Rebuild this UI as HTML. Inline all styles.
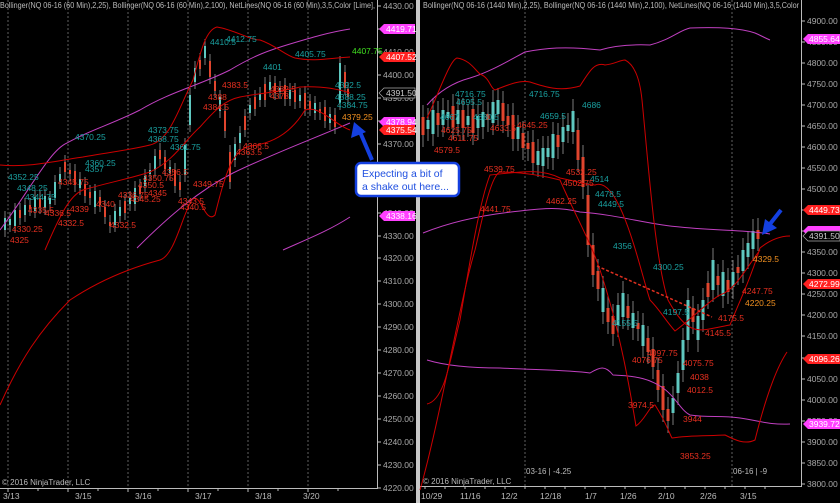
<!DOCTYPE html>
<html><head><meta charset="utf-8"><style>
html,body{margin:0;padding:0;background:#000;width:840px;height:503px;overflow:hidden}
svg{display:block;font-family:"Liberation Sans",sans-serif}
</style></head><body>
<svg width="840" height="503" viewBox="0 0 840 503" xmlns="http://www.w3.org/2000/svg">
<rect width="840" height="503" fill="#000"/>
<rect x="416" y="0" width="4" height="503" fill="#c8c8c8"/>
<g stroke="#888" stroke-width="0.7" stroke-dasharray="2,2">
<line x1="8" y1="0" x2="8" y2="488"/><line x1="68" y1="0" x2="68" y2="488"/><line x1="128" y1="0" x2="128" y2="488"/>
<line x1="188" y1="0" x2="188" y2="488"/><line x1="248" y1="0" x2="248" y2="488"/><line x1="308" y1="0" x2="308" y2="488"/>
<line x1="525" y1="0" x2="525" y2="486"/><line x1="732" y1="0" x2="732" y2="486"/>
</g>
<g stroke="#bbb" stroke-width="1" fill="none">
<line x1="377.5" y1="0" x2="377.5" y2="489"/><line x1="0" y1="488.5" x2="378" y2="488.5"/>
<line x1="801.5" y1="0" x2="801.5" y2="487"/><line x1="420" y1="486.5" x2="802" y2="486.5"/>
<path d="M377,6h4M377,29h4M377,52h4M377,75h4M377,98h4M377,121h4M377,144h4M377,167h4M377,190h4M377,213h4M377,236h4M377,258h4M377,281h4M377,304h4M377,327h4M377,350h4M377,373h4M377,396h4M377,419h4M377,442h4M377,465h4M377,488h4"/>
<path d="M801,21h4M801,42h4M801,63h4M801,84h4M801,105h4M801,126h4M801,147h4M801,168h4M801,189h4M801,210h4M801,231h4M801,252h4M801,273h4M801,294h4M801,315h4M801,336h4M801,358h4M801,379h4M801,400h4M801,421h4M801,442h4M801,463h4M801,484h4"/>
<path d="M8,488v4M38,488v3M68,488v4M98,488v3M128,488v4M158,488v3M188,488v4M218,488v3M248,488v4M278,488v3M308,488v4M338,488v3"/>
<path d="M425,486v3M445,486v3M465,486v3M485,486v3M505,486v3M525,486v3M545,486v3M565,486v3M585,486v3M605,486v3M625,486v3M645,486v3M665,486v3M685,486v3M705,486v3M725,486v3M745,486v3M765,486v3"/>
</g>
<path fill="none" stroke="#999" stroke-width="0.8" d="M5,211V237M10,212V232M15,203V233M25,198V222M35,190V218M45,189V215M50,191V211M55,175V205M60,167V189M80,172V195M95,184V214M115,204V232M120,200V223M130,191V211M135,181V211M145,169V193M150,163V181M155,149V177M170,160V180M185,138V182M190,88V132M195,61V89M205,39V65M220,90V118M235,137V167M240,126V150M250,98V120M260,87V107M270,75V97M280,81V99M290,83V106M300,88V108M315,96V120M330,107V130M340,56V110M20,203V225M30,198V216M40,191V214M65,155V179M70,163V181M75,164V192M85,177V203M90,185V205M100,190V212M105,200V224M110,215V233M125,194V220M140,179V201M160,143V166M165,150V176M175,163V193M180,175V197M200,53V76M210,54V84M215,74V98M225,104V138M230,145V189M245,109V137M255,90V116M265,77V107M275,76V100M285,78V106M295,83V109M305,86V116M310,94V116M320,102V120M325,100V128M335,108V134M345,65V95M348,82V104
M423,105V147M428,108V141M433,98V146M438,101V137M443,98V137M448,100V130M453,94V139M458,98V136M463,98V140M468,104V137M473,97V145M478,104V140M483,100V139M488,102V132M493,90V135M498,88V126M503,91V133M508,104V137M513,103V151M518,115V151M523,121V160M528,131V161M533,130V175M538,139V177M543,136V178M548,136V169M553,122V170M558,123V159M563,115V154M568,113V143M573,99V144M578,118V172M583,145V199M588,183V257M593,233V287M598,259V301M603,276V324M608,296V334M613,304V346M618,293V337M623,281V329M628,294V330M633,301V340M638,311V341M643,313V358M648,326V364M653,337V379M658,358V402M663,374V422M668,397V433M673,386V425M678,361V405M683,328V382M688,288V352M693,296V334M698,304V352M703,288V332M708,271V309M713,248V302M718,264V297M723,260V308M728,268V304M733,260V299M738,255V285M743,238V283M748,231V269M753,219V261M758,218V251"/>
<path fill="#5fc8c0" d="M4 218h2v12h-2zM9 219h2v6h-2zM14 210h2v16h-2zM24 205h2v10h-2zM34 197h2v14h-2zM44 196h2v12h-2zM49 198h2v6h-2zM54 182h2v16h-2zM59 174h2v8h-2zM79 179h2v9h-2zM94 191h2v16h-2zM114 211h2v14h-2zM119 207h2v9h-2zM129 198h2v6h-2zM134 188h2v16h-2zM144 176h2v10h-2zM149 170h2v4h-2zM154 156h2v14h-2zM169 167h2v6h-2zM184 145h2v30h-2zM189 95h2v30h-2zM194 68h2v14h-2zM204 46h2v12h-2zM219 97h2v14h-2zM234 144h2v16h-2zM239 133h2v10h-2zM249 105h2v8h-2zM259 94h2v6h-2zM269 82h2v8h-2zM279 88h2v4h-2zM289 90h2v9h-2zM299 95h2v6h-2zM314 103h2v10h-2zM329 114h2v9h-2zM339 63h2v40h-2z
M426.5 120h3v9h-3zM431.5 110h3v24h-3zM441.5 110h3v15h-3zM446.5 112h3v6h-3zM456.5 110h3v14h-3zM466.5 116h3v9h-3zM476.5 116h3v12h-3zM481.5 112h3v15h-3zM491.5 102h3v21h-3zM496.5 100h3v14h-3zM516.5 127h3v12h-3zM536.5 151h3v14h-3zM541.5 148h3v18h-3zM546.5 148h3v9h-3zM551.5 134h3v24h-3zM561.5 127h3v15h-3zM566.5 125h3v6h-3zM571.5 111h3v21h-3zM601.5 288h3v24h-3zM616.5 305h3v20h-3zM621.5 293h3v24h-3zM631.5 313h3v15h-3zM641.5 325h3v21h-3zM671.5 398h3v15h-3zM676.5 373h3v20h-3zM681.5 340h3v30h-3zM686.5 300h3v40h-3zM696.5 316h3v24h-3zM701.5 300h3v20h-3zM711.5 260h3v30h-3zM721.5 272h3v24h-3zM731.5 272h3v15h-3zM741.5 250h3v21h-3zM746.5 243h3v14h-3zM751.5 231h3v18h-3z"/>
<path fill="#e0452e" d="M19 210h2v8h-2zM29 205h2v4h-2zM39 198h2v9h-2zM64 162h2v10h-2zM69 170h2v4h-2zM74 171h2v14h-2zM84 184h2v12h-2zM89 192h2v6h-2zM99 197h2v8h-2zM104 207h2v10h-2zM109 222h2v4h-2zM124 201h2v12h-2zM139 186h2v8h-2zM159 150h2v9h-2zM164 157h2v12h-2zM174 170h2v16h-2zM179 182h2v8h-2zM199 60h2v9h-2zM209 61h2v16h-2zM214 81h2v10h-2zM224 111h2v20h-2zM229 152h2v30h-2zM244 116h2v14h-2zM254 97h2v12h-2zM264 84h2v16h-2zM274 83h2v10h-2zM284 85h2v14h-2zM294 90h2v12h-2zM304 93h2v16h-2zM309 101h2v8h-2zM319 109h2v4h-2zM324 107h2v14h-2zM334 115h2v12h-2zM344 72h2v16h-2zM347 89h2v8h-2z
M421.5 117h3v18h-3zM436.5 113h3v12h-3zM451.5 106h3v21h-3zM461.5 110h3v18h-3zM471.5 109h3v24h-3zM486.5 114h3v6h-3zM501.5 103h3v18h-3zM506.5 116h3v9h-3zM511.5 115h3v24h-3zM521.5 133h3v15h-3zM526.5 143h3v6h-3zM531.5 142h3v21h-3zM556.5 135h3v12h-3zM576.5 130h3v30h-3zM581.5 157h3v30h-3zM586.5 195h3v50h-3zM591.5 245h3v30h-3zM596.5 271h3v18h-3zM606.5 308h3v14h-3zM611.5 316h3v18h-3zM626.5 306h3v12h-3zM636.5 323h3v6h-3zM646.5 338h3v14h-3zM651.5 349h3v18h-3zM656.5 370h3v20h-3zM661.5 386h3v24h-3zM666.5 409h3v12h-3zM691.5 308h3v14h-3zM706.5 283h3v14h-3zM716.5 276h3v9h-3zM726.5 280h3v12h-3zM736.5 267h3v6h-3zM756.5 230h3v9h-3z"/>
<g fill="none" stroke-width="1">
<path stroke="#c040c0" d="M0,230 C30,190 50,150 67,143 C90,130 110,125 140,110 C170,92 200,85 230,70 C255,55 270,50 290,44 C310,38 330,32 350,29"/>
<path stroke="#c040c0" d="M137,248 C170,215 200,190 233,173 C270,155 310,140 350,123"/>
<path stroke="#c040c0" d="M283,250 C310,238 330,230 350,217"/>
<path stroke="#c00" d="M0,165 C30,168 60,160 83,157 C110,152 130,150 150,145 C170,140 178,110 193,80 C200,55 205,30 217,27 C235,30 250,40 260,40 C275,45 285,55 295,58 C315,62 330,58 350,57"/>
<path stroke="#c00" d="M45,250 C60,215 70,195 83,190 C110,182 125,180 150,172 C175,160 185,140 200,127 C215,110 225,100 240,97 C260,93 280,92 300,87 C320,86 335,88 350,93"/>
<path stroke="#c00" d="M0,405 C20,360 40,330 70,300 C100,280 130,268 160,260 C175,255 182,215 192,200 C200,190 205,225 215,215 C225,175 232,150 250,146 C270,144 290,135 305,110 C320,105 335,125 350,130"/>
<path stroke="#c040c0" d="M427,105 C440,90 455,82 470,78 C490,72 510,60 525,52 C545,48 565,46 600,50 C610,47 625,44 650,45 C670,40 680,30 690,28 C720,27 740,28 755,33 C760,35 765,38 770,40"/>
<path stroke="#c040c0" d="M423,233 C450,222 480,215 520,211 C545,208 560,207 580,212 C620,215 650,225 680,227 C720,231 745,230 770,234"/>
<path stroke="#c040c0" d="M427,360 C450,367 480,368 500,368 C540,370 570,370 590,373 C600,367 605,365 613,375 C640,376 650,380 660,386 C675,395 680,410 690,415 C710,418 720,415 740,418 C760,421 770,425 790,424"/>
<path stroke="#c00" d="M427,118 C440,90 450,60 457,58 C470,60 475,70 480,74 C490,78 490,88 495,90 C510,84 520,80 530,82 C545,87 560,92 580,86 C590,70 595,62 605,65 C615,64 620,60 625,60 C635,65 640,80 642,100 C648,160 655,260 668,300 C690,340 700,330 730,325 C740,300 750,280 760,248 C770,240 780,236 790,236"/>
<path stroke="#c00" d="M427,404 C445,400 450,360 460,320 C470,260 480,200 490,175 C520,172 540,168 560,178 C580,182 585,185 595,185 C620,175 640,270 650,300 C660,310 665,320 675,331 C690,320 710,300 720,295 C735,290 745,270 760,250"/>
<path stroke="#c00" d="M420,490 C440,420 460,300 475,250 C480,230 490,175 500,172 C520,172 540,175 560,180 C575,215 590,240 600,270 C620,330 630,390 636,426 C645,420 650,405 655,405 C665,420 670,435 672,438 C690,435 710,436 725,435 C735,440 745,445 755,440 C765,400 775,370 787,352"/>
<path stroke="#e03020" stroke-width="1.5" stroke-dasharray="3,2" d="M597,266 L712,317"/>
</g>
<g font-size="8.5" fill="#1aa0a0">
<text x="210" y="45">4410.5</text><text x="226" y="42">4412.75</text><text x="295" y="57">4405.75</text><text x="263" y="70">4401</text>
<text x="75" y="140">4370.25</text><text x="148" y="133">4373.75</text><text x="148" y="142">4368.75</text><text x="170" y="150">4361.75</text>
<text x="85" y="166">4360.25</text><text x="85" y="172">4357</text><text x="8" y="180">4352.25</text><text x="17" y="191">4348.25</text><text x="25" y="200">4344.75</text>
<text x="335" y="88">4392.5</text><text x="335" y="100">4388.25</text><text x="337" y="108">4384.75</text>
<text x="455" y="97">4716.75</text><text x="456" y="105">4695.5</text><text x="529" y="97">4716.75</text><text x="582" y="108">4686</text>
<text x="540" y="119">4659.5</text><text x="473" y="120">4680.5</text><text x="440" y="120">4667</text>
<text x="590" y="182">4514</text><text x="595" y="197">4478.5</text><text x="598" y="207">4449.5</text>
<text x="613" y="249">4356</text><text x="653" y="270">4300.25</text><text x="663" y="315">4197.5</text><text x="612" y="326">4155.5</text>
</g>
<g font-size="8.5" fill="#e83020">
<text x="208" y="100">4388</text><text x="203" y="110">4384.5</text><text x="222" y="88">4383.5</text><text x="270" y="92">4382.5</text><text x="270" y="99">4378</text>
<text x="143" y="181">4350.75</text><text x="138" y="188">4350.5</text><text x="162" y="175">4356.5</text><text x="193" y="187">4349.75</text>
<text x="243" y="149">4366.5</text><text x="236" y="155">4363.5</text><text x="178" y="204">4343.5</text><text x="180" y="210">4340.5</text>
<text x="148" y="196">4345</text><text x="130" y="202">4345.25</text><text x="96" y="207">4340</text><text x="118" y="198">4336.75</text>
<text x="28" y="213">4335.5</text><text x="45" y="216">4336.5</text><text x="70" y="212">4339</text><text x="58" y="226">4332.5</text><text x="110" y="228">4332.5</text>
<text x="12" y="232">4330.25</text><text x="10" y="243">4325</text><text x="58" y="185">4345.75</text>
<text x="434" y="153">4579.5</text><text x="441" y="133">4625.75</text><text x="448" y="141">4611.75</text><text x="490" y="131">4633.5</text><text x="517" y="128">4645.25</text>
<text x="484" y="172">4539.75</text><text x="566" y="175">4532.25</text><text x="563" y="186">4502.75</text><text x="546" y="204">4462.25</text><text x="480" y="212">4441.75</text>
<text x="632" y="363">4076.75</text><text x="647" y="356">4097.75</text><text x="628" y="408">3974.5</text><text x="690" y="380">4038</text><text x="687" y="393">4012.5</text>
<text x="683" y="366">4075.75</text><text x="683" y="422">3944</text><text x="680" y="459">3853.25</text><text x="705" y="336">4145.5</text><text x="718" y="321">4175.5</text>
<text x="742" y="294">4247.75</text>
</g>
<g font-size="8.5" fill="#f09020">
<text x="342" y="120">4379.25</text><text x="753" y="262">4329.5</text><text x="745" y="306">4220.25</text>
</g>
<text x="352" y="54" font-size="8.5" fill="#40e020">4407.75</text>
<g font-size="8.5" fill="#aaa">
<text x="383" y="9">4430.00</text><text x="383" y="32">4420.00</text><text x="383" y="55">4410.00</text><text x="383" y="78">4400.00</text><text x="383" y="101">4390.00</text><text x="383" y="124">4380.00</text><text x="383" y="147">4370.00</text><text x="383" y="170">4360.00</text><text x="383" y="193">4350.00</text><text x="383" y="216">4340.00</text><text x="383" y="239">4330.00</text><text x="383" y="261">4320.00</text><text x="383" y="284">4310.00</text><text x="383" y="307">4300.00</text><text x="383" y="330">4290.00</text><text x="383" y="353">4280.00</text><text x="383" y="376">4270.00</text><text x="383" y="399">4260.00</text><text x="383" y="422">4250.00</text><text x="383" y="445">4240.00</text><text x="383" y="468">4230.00</text><text x="383" y="491">4220.00</text>
<text x="807" y="24">4900.00</text><text x="807" y="45">4850.00</text><text x="807" y="66">4800.00</text><text x="807" y="87">4750.00</text><text x="807" y="108">4700.00</text><text x="807" y="129">4650.00</text><text x="807" y="150">4600.00</text><text x="807" y="171">4550.00</text><text x="807" y="192">4500.00</text><text x="807" y="213">4450.00</text><text x="807" y="234">4400.00</text><text x="807" y="255">4350.00</text><text x="807" y="276">4300.00</text><text x="807" y="297">4250.00</text><text x="807" y="318">4200.00</text><text x="807" y="339">4150.00</text><text x="807" y="361">4100.00</text><text x="807" y="382">4050.00</text><text x="807" y="403">4000.00</text><text x="807" y="424">3950.00</text><text x="807" y="445">3900.00</text><text x="807" y="466">3850.00</text><text x="807" y="487">3800.00</text>
</g>
<g font-size="8.5">
<path d="M379,29 L384,24 L415,24 L415,34 L384,34Z" fill="#ff40ff"/><text x="386" y="32" fill="#fff">4419.71</text>
<path d="M379,57 L384,52 L415,52 L415,62 L384,62Z" fill="#ff2020"/><text x="386" y="60" fill="#fff">4407.52</text>
<path d="M379,93 L384,88 L415,88 L415,98 L384,98Z" fill="#000" stroke="#aaa" stroke-width="0.7"/><text x="386" y="96" fill="#ccc">4391.50</text>
<path d="M379,122 L384,117 L415,117 L415,127 L384,127Z" fill="#ff40ff"/><text x="386" y="125" fill="#fff">4378.94</text>
<path d="M379,130 L384,125 L415,125 L415,135 L384,135Z" fill="#ff2020"/><text x="386" y="133" fill="#fff">4375.54</text>
<path d="M379,216 L384,211 L415,211 L415,221 L384,221Z" fill="#ff40ff"/><text x="386" y="219" fill="#fff">4338.16</text>
<path d="M803,39 L808,34 L840,34 L840,44 L808,44Z" fill="#ff40ff"/><text x="809" y="42" fill="#fff">4855.64</text>
<path d="M803,210 L808,205 L840,205 L840,215 L808,215Z" fill="#ff2020"/><text x="809" y="213" fill="#fff">4449.73</text>
<path d="M803,231 L808,226 L840,226 L840,236 L808,236Z" fill="#ff40ff"/>
<path d="M803,236 L808,231 L840,231 L840,241 L808,241Z" fill="#000" stroke="#aaa" stroke-width="0.7"/><text x="809" y="239" fill="#ccc">4391.50</text>
<path d="M803,284 L808,279 L840,279 L840,289 L808,289Z" fill="#ff2020"/><text x="809" y="287" fill="#fff">4272.99</text>
<path d="M803,359 L808,354 L840,354 L840,364 L808,364Z" fill="#ff2020"/><text x="809" y="362" fill="#fff">4096.26</text>
<path d="M803,424 L808,419 L840,419 L840,429 L808,429Z" fill="#ff40ff"/><text x="809" y="427" fill="#fff">3939.72</text>
</g>
<g font-size="8" fill="#bbb">
<text x="0" y="8" textLength="375" lengthAdjust="spacingAndGlyphs">Bollinger(NQ 06-16 (60 Min),2,25), Bollinger(NQ 06-16 (60 Min),2,100), NetLines(NQ 06-16 (60 Min),3,5,Color [Lime],</text>
<text x="423" y="8" textLength="376" lengthAdjust="spacingAndGlyphs">Bollinger(NQ 06-16 (1440 Min),2,25), Bollinger(NQ 06-16 (1440 Min),2,100), NetLines(NQ 06-16 (1440 Min),3,5,Color</text>
<text x="2" y="485">© 2016 NinjaTrader, LLC</text>
<text x="423" y="484">© 2016 NinjaTrader, LLC</text>
<text x="526" y="474">03-16 | -4.25</text><text x="733" y="474">06-16 | -9</text>
</g>
<g font-size="8.5" fill="#bbb">
<text x="3" y="499">3/13</text><text x="75" y="499">3/15</text><text x="135" y="499">3/16</text><text x="195" y="499">3/17</text><text x="255" y="499">3/18</text><text x="303" y="499">3/20</text>
<text x="421" y="499">10/29</text><text x="460" y="499">11/16</text><text x="501" y="499">12/2</text><text x="540" y="499">12/18</text><text x="585" y="499">1/7</text><text x="620" y="499">1/26</text><text x="658" y="499">2/10</text><text x="700" y="499">2/26</text><text x="740" y="499">3/15</text>
</g>
<line x1="372" y1="160" x2="360" y2="132" stroke="#1440e0" stroke-width="4"/>
<path d="M354,122 L351,138 L366,132Z" fill="#1440e0"/>
<rect x="356" y="163" width="103" height="33" rx="5" fill="#fff" stroke="#1440e0" stroke-width="2.5"/>
<text x="362" y="177" font-size="10.5" fill="#2050e0">Expecting a bit of</text>
<text x="362" y="190" font-size="10.5" fill="#2050e0">a shake out here...</text>
<line x1="781" y1="210" x2="770" y2="224" stroke="#1440e0" stroke-width="4"/>
<path d="M762,235 L765,219 L777,228Z" fill="#1440e0"/>
</svg>
</body></html>
